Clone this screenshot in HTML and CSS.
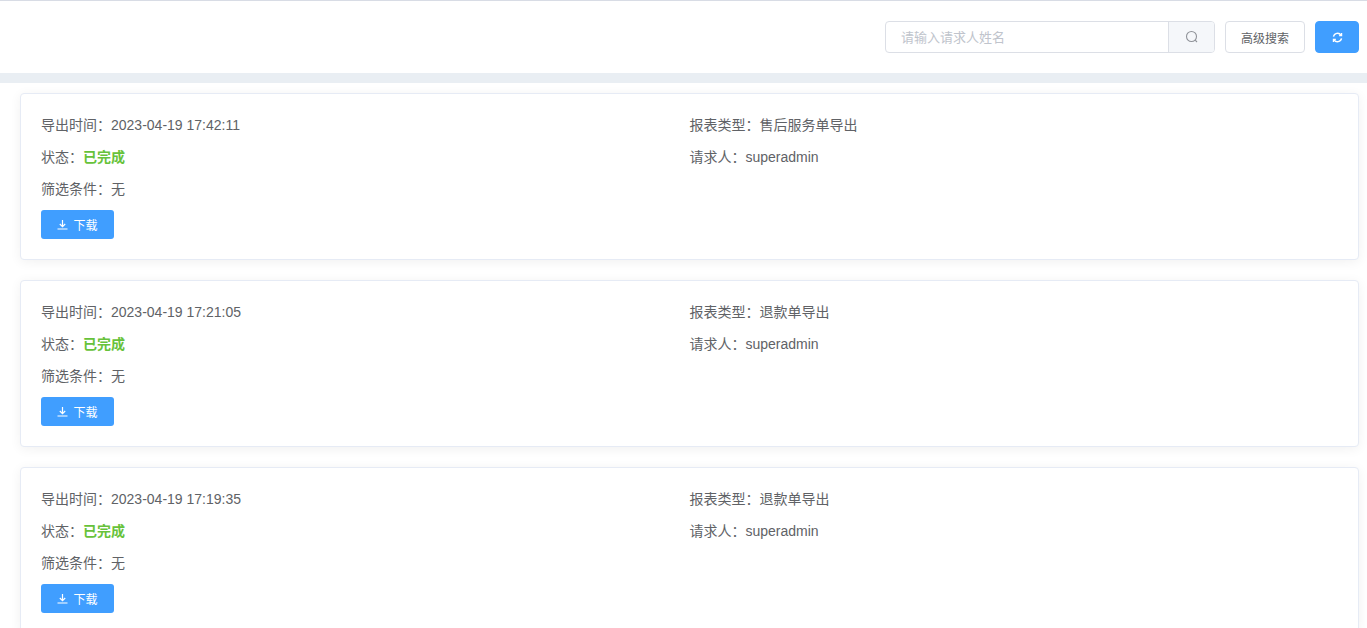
FILE: index.html
```html
<!DOCTYPE html>
<html lang="zh-CN">
<head>
<meta charset="utf-8">
<title>导出记录</title>
<link rel="stylesheet" href="styles.css">
</head>
<body>
<header class="toolbar">
  <div class="search">
    <div class="search-input">请输入请求人姓名</div>
    <div class="search-btn">
      <svg viewBox="0 0 14 14" width="14" height="14"><circle cx="6.500" cy="6.500" r="5" fill="none" stroke="#909399" stroke-width="1.100"/><path d="M10.200 10.200L12 12" stroke="#909399" stroke-width="1.100" fill="none"/></svg>
    </div>
  </div>
  <button class="btn btn-plain">高级搜索</button>
  <button class="btn btn-refresh" aria-label="刷新">
    <svg viewBox="0 0 12 12" width="11" height="11" fill="none" stroke="#fff" stroke-width="1.500"><path d="M1.600 5A4.500 4.500 0 0 1 9.800 3.400"/><path d="M10.400 7A4.500 4.500 0 0 1 2.200 8.600"/><path d="M10.400 1.200V3.800H7.800"/><path d="M1.600 10.800V8.200H4.200"/></svg>
  </button>
</header>
<div class="band"></div>
<main class="list">
  <section class="card">
    <div class="row">导出时间：2023-04-19 17:42:11</div>
    <div class="row">报表类型：售后服务单导出</div>
    <div class="row">状态：<b class="done">已完成</b></div>
    <div class="row">请求人：superadmin</div>
    <div class="row wide">筛选条件：无</div>
    <div class="actions"><button class="btn-dl"><svg viewBox="0 0 11 11" width="11" height="11" fill="none" stroke="#fff" stroke-width="1.200"><path d="M5.500 1V7.500M2.800 5L5.500 7.700L8.200 5M0.500 10H10.500"/></svg>下载</button></div>
  </section>
  <section class="card">
    <div class="row">导出时间：2023-04-19 17:21:05</div>
    <div class="row">报表类型：退款单导出</div>
    <div class="row">状态：<b class="done">已完成</b></div>
    <div class="row">请求人：superadmin</div>
    <div class="row wide">筛选条件：无</div>
    <div class="actions"><button class="btn-dl"><svg viewBox="0 0 11 11" width="11" height="11" fill="none" stroke="#fff" stroke-width="1.200"><path d="M5.500 1V7.500M2.800 5L5.500 7.700L8.200 5M0.500 10H10.500"/></svg>下载</button></div>
  </section>
  <section class="card">
    <div class="row">导出时间：2023-04-19 17:19:35</div>
    <div class="row">报表类型：退款单导出</div>
    <div class="row">状态：<b class="done">已完成</b></div>
    <div class="row">请求人：superadmin</div>
    <div class="row wide">筛选条件：无</div>
    <div class="actions"><button class="btn-dl"><svg viewBox="0 0 11 11" width="11" height="11" fill="none" stroke="#fff" stroke-width="1.200"><path d="M5.500 1V7.500M2.800 5L5.500 7.700L8.200 5M0.500 10H10.500"/></svg>下载</button></div>
  </section>
</main>
</body>
</html>
```
FILE: styles.css
```css
* { box-sizing: border-box; }
html, body { margin: 0; height: 100%; overflow: hidden; background: #fff; }
body { font-family: "Liberation Sans", "Noto Sans CJK SC", sans-serif; font-size: 14px; color: #606266; }
.toolbar { height: 73px; border-top: 1px solid #d8dce5; display: flex; justify-content: flex-end; align-items: flex-start; gap: 10px; padding: 20px 8px 0 0; }
.search { display: flex; width: 330px; height: 32px; border: 1px solid #dcdfe6; border-radius: 4px; overflow: hidden; }
.search-input { flex: 1; padding-left: 15px; line-height: 31px; font-size: 13px; color: #c0c4cc; }
.search-btn { width: 46px; background: #f5f7fa; border-left: 1px solid #dcdfe6; display: flex; align-items: center; justify-content: center; }
.btn { height: 32px; border-radius: 4px; font: inherit; font-size: 12px; padding: 0; cursor: pointer; display: flex; align-items: center; justify-content: center; }
.btn-plain { width: 80px; background: #fff; border: 1px solid #dcdfe6; color: #606266; }
.btn-refresh { width: 44px; background: #409eff; border: 1px solid #409eff; }
.band { height: 10px; background: #e9eef3; }
.list { padding: 10px 8px 0 20px; display: flex; flex-direction: column; gap: 20px; }
.card { height: 167px; background: #fff; border: 1px solid #e6ebf5; border-radius: 4px; box-shadow: 0 2px 12px 0 rgba(0, 0, 0, 0.06); padding: 15px 20px 0; display: grid; grid-template-columns: 1fr 1fr; grid-auto-rows: 32px; align-content: start; }
.row { line-height: 32px; }
.wide { grid-column: 1 / -1; }
.done { color: #67c23a; font-weight: 700; }
.actions { grid-column: 1 / -1; padding-top: 5px; }
.btn-dl { width: 73px; height: 29px; background: #409eff; border: 0; border-radius: 3px; color: #fff; font: inherit; font-size: 12px; padding: 0; display: flex; align-items: center; justify-content: center; gap: 5px; }
```
